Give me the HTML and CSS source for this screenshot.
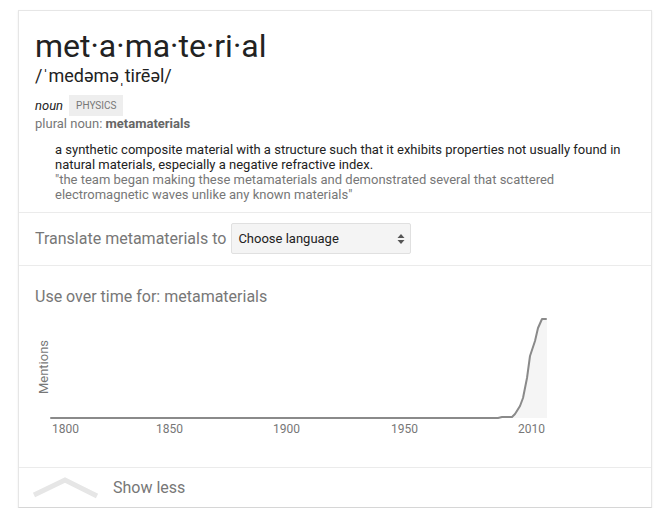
FILE: index.html
```html
<!DOCTYPE html>
<html lang="en">
<head>
<meta charset="utf-8">
<title>metamaterial</title>
<link rel="stylesheet" href="styles.css">
</head>
<body>
<div class="card">
  <section class="head">
    <div class="word">met·a·ma·te·ri·al</div>
    <div class="pron">/ˈmedəməˌtirēəl/</div>
    <div class="pos-row">
      <span class="pos">noun</span>
      <span class="badge">PHYSICS</span>
    </div>
    <div class="plural">plural noun: <b>metamaterials</b></div>
    <div class="defs">
      <div class="def">a synthetic composite material with a structure such that it exhibits properties not usually found in natural materials, especially a negative refractive index.</div>
      <div class="example">"the team began making these metamaterials and demonstrated several that scattered electromagnetic waves unlike any known materials"</div>
    </div>
  </section>
  <section class="translate">
    <span class="translate-label">Translate metamaterials to</span>
    <div class="select">
      <span>Choose language</span>
      <svg class="arrows" width="8" height="12" viewBox="0 0 8 12"><path d="M4 1 L7.5 5 L0.5 5 Z M4 11 L7.5 7 L0.5 7 Z" fill="#555"/></svg>
    </div>
  </section>
  <section class="usage">
    <div class="usage-title">Use over time for: metamaterials</div>
    <svg class="chart" width="525" height="130" viewBox="0 0 525 130">
      <path d="M463 107 L467 106 L477 106 L480 103 L485 95 L488 87 L492 67 L495 45 L500 30 L503 17 L507 8 L511 8 L512 8 L512 107 Z" fill="#f5f5f5"/>
      <path d="M16 107 L463 107 L467 106 L477 106 L480 103 L485 95 L488 87 L492 67 L495 45 L500 30 L503 17 L507 8 L511 8" fill="none" stroke="#8a8a8a" stroke-width="2" stroke-linejoin="round" stroke-linecap="round"/>
      <text class="axis axis-y" transform="translate(13,56) rotate(-90)" text-anchor="middle">Mentions</text>
      <text class="axis" x="17" y="122">1800</text>
      <text class="axis" x="121" y="122">1850</text>
      <text class="axis" x="238" y="122">1900</text>
      <text class="axis" x="356" y="122">1950</text>
      <text class="axis" x="483" y="122">2010</text>
    </svg>
  </section>
  <section class="more">
    <svg class="chevron" width="68" height="24" viewBox="0 0 68 24"><polyline points="2,19 33,4 65,20" fill="none" stroke="#e6e6e6" stroke-width="5"/></svg>
    <span class="more-label">Show less</span>
  </section>
</div>
</body>
</html>
```
FILE: styles.css
```css
html, body {
  margin: 0;
  padding: 0;
  background: #fff;
}
body {
  font-family: Roboto, "Liberation Sans", Arial, sans-serif;
  color: #222;
}
.card {
  box-sizing: border-box;
  width: 634px;
  margin: 10px 0 0 18px;
  border: 1px solid #e6e6e6;
  border-bottom-color: #d6d6d6;
  box-shadow: 0 1px 2px rgba(0,0,0,0.08);
  background: #fff;
}
.head {
  padding: 16px 16px 10px 16px;
}
.word {
  font-size: 32px;
  line-height: 38px;
  color: #222;
}
.pron {
  font-size: 18px;
  line-height: 22px;
  color: #222;
}
.pos-row {
  display: flex;
  align-items: center;
  height: 21px;
  margin-top: 8px;
}
.pos {
  font-style: italic;
  font-size: 13px;
  color: #222;
}
.badge {
  margin-left: 6px;
  height: 21px;
  line-height: 21px;
  padding: 0 7px;
  background: #eee;
  color: #777;
  font-size: 10px;
}
.plural {
  font-size: 13px;
  line-height: 15px;
  color: #777;
}
.plural b {
  color: #666;
}
.defs {
  margin-top: 11px;
  padding-left: 20px;
  font-size: 13px;
  line-height: 15px;
}
.def {
  color: #222;
}
.example {
  color: #777;
}
.translate {
  display: flex;
  align-items: center;
  gap: 5px;
  border-top: 1px solid #ebebeb;
  border-bottom: 1px solid #ebebeb;
  padding: 10px 16px 11px 16px;
}
.translate-label {
  font-size: 16px;
  color: #777;
}
.select {
  box-sizing: border-box;
  width: 180px;
  height: 31px;
  display: flex;
  align-items: center;
  justify-content: space-between;
  padding: 0 5px 0 6px;
  background: #f4f4f4;
  border: 1px solid #e0e0e0;
  border-radius: 2px;
  font-size: 13px;
  color: #222;
}
.usage {
  padding: 21px 16px 26px 16px;
}
.usage-title {
  font-size: 16px;
  line-height: 20px;
  color: #777;
}
.chart {
  display: block;
  margin-top: 4px;
}
.axis {
  font-family: Roboto, "Liberation Sans", Arial, sans-serif;
  font-size: 12px;
  fill: #777;
}
.axis-y {
  font-size: 13px;
}
.more {
  display: flex;
  align-items: center;
  height: 39px;
  border-top: 1px solid #ebebeb;
  padding-left: 13px;
}
.chevron {
  display: block;
}
.more-label {
  margin-left: 13px;
  font-size: 16px;
  color: #777;
}
```
